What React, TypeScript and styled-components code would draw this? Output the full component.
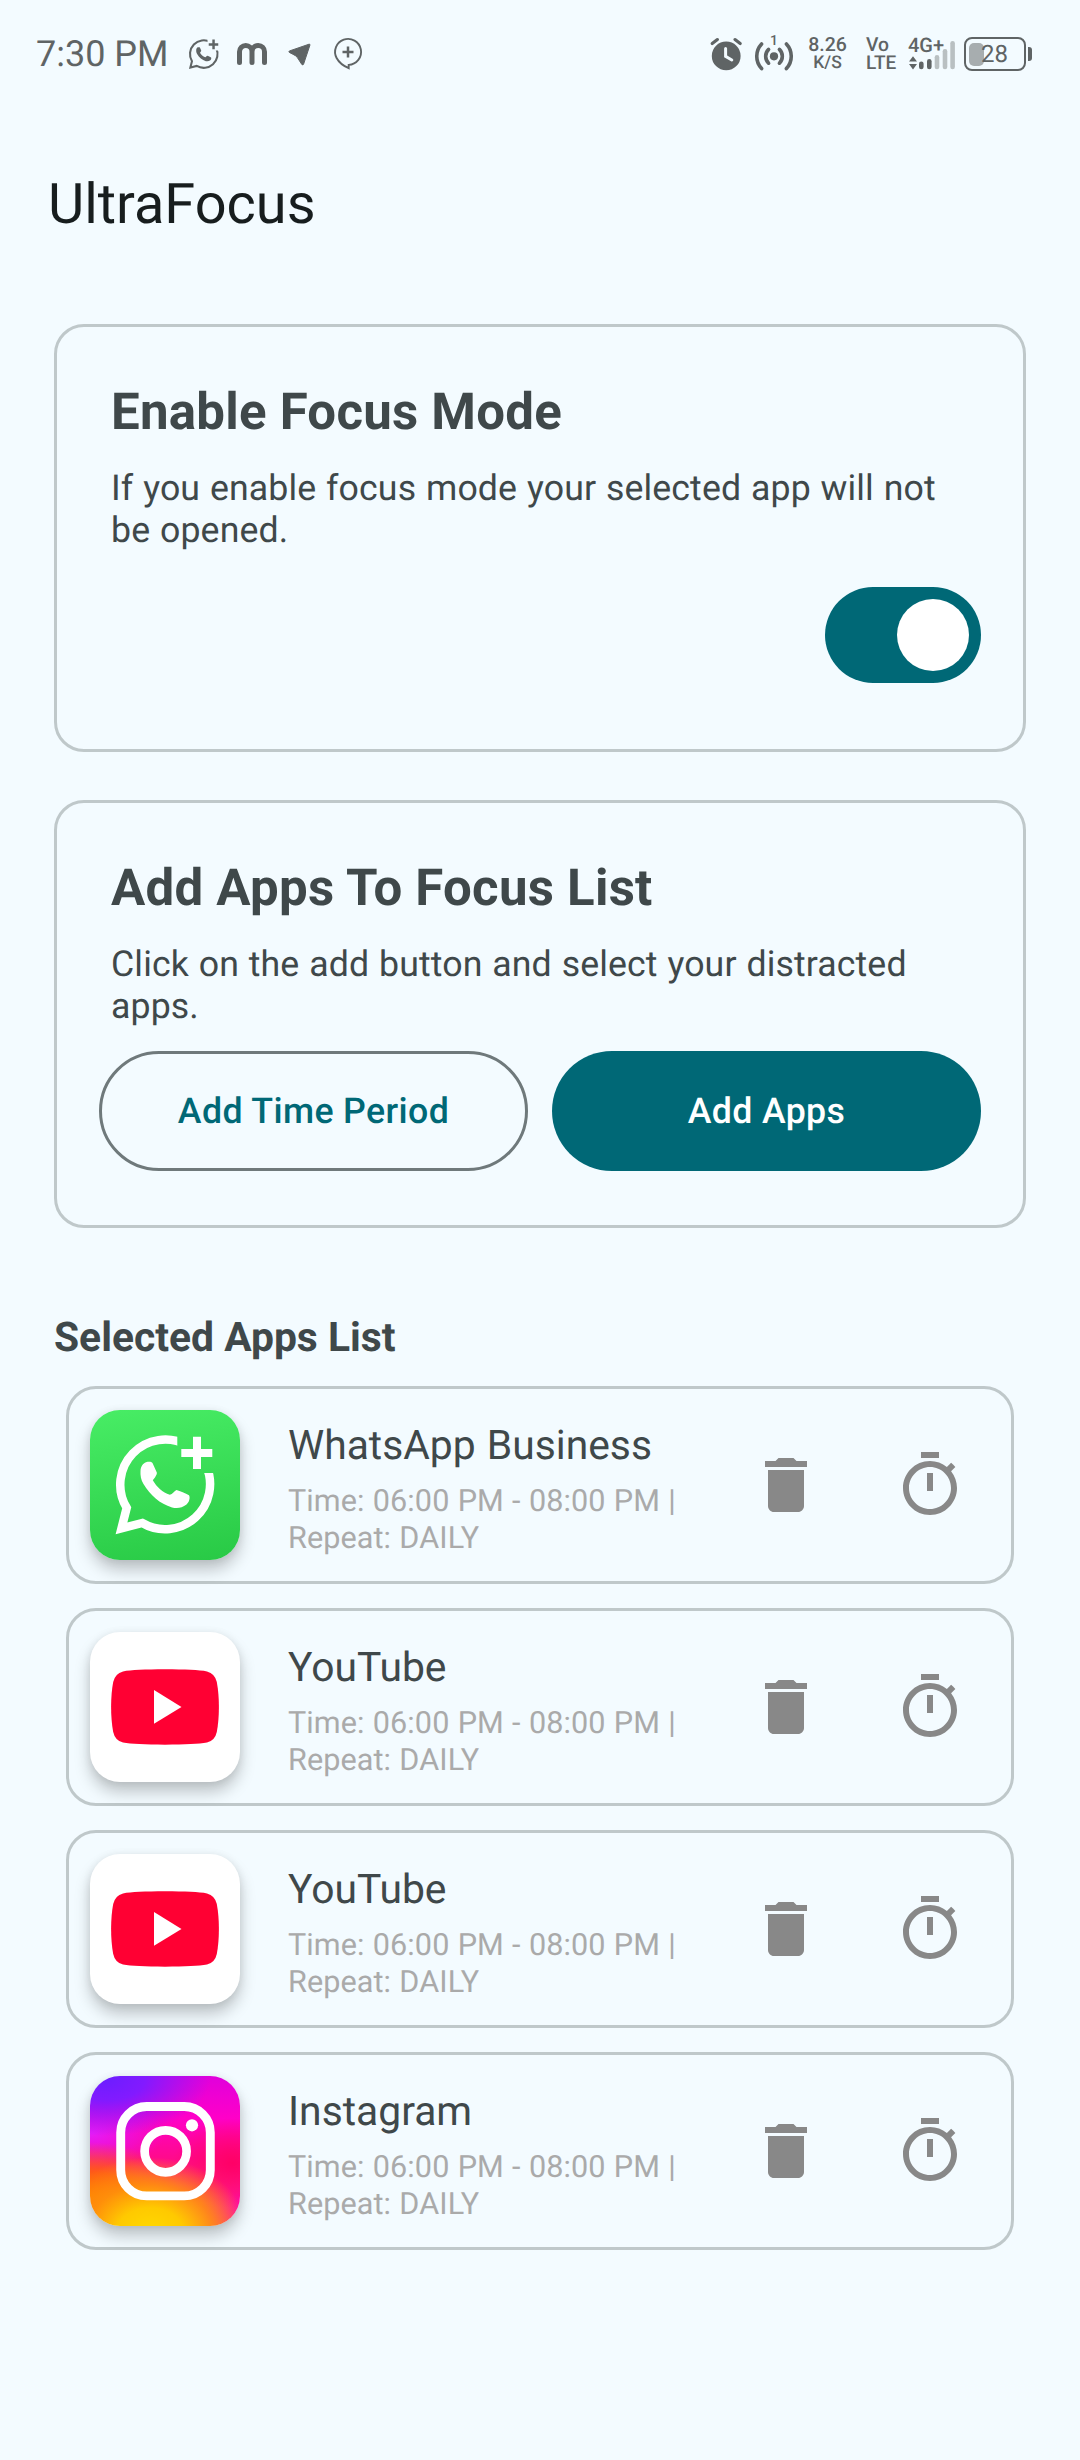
import React, { useState } from 'react';
import styled, { createGlobalStyle } from 'styled-components';

const color = {
  background: '#f3fbff',
  primary: '#006876',
  onSurface: '#171d1e',
  onSurfaceVariant: '#3f484a',
  outline: '#6f797b',
  outlineVariant: '#bfc8ca',
  muted: '#aaaaaa',
  icon: '#888888',
  status: '#5f6465',
};

const GlobalStyle = createGlobalStyle`
  *, *::before, *::after { box-sizing: border-box; }
  body {
    margin: 0;
    background: ${color.background};
    font-family: Roboto, sans-serif;
    text-rendering: geometricPrecision;
  }
  h1, h2, h3, p { margin: 0; }
  button { font: inherit; text-rendering: inherit; }
`;

const Screen = styled.div`
  display: flex;
  flex-direction: column;
  width: 1080px;
  height: 2460px;
  background: ${color.background};
`;

/* ---------- Status bar ---------- */

const StatusBar = styled.header`
  display: flex;
  justify-content: space-between;
  height: 108px;
  padding: 0 48px 0 36px;
  color: ${color.status};
`;

const StatusGroup = styled.div`
  display: flex;
  align-items: center;
`;

const Clock = styled.span`
  width: 144px;
  font-size: 36px;
  line-height: 42px;
  white-space: nowrap;
`;

const StatusIcon = styled.svg`
  display: block;
  flex: none;
  width: 48px;
  height: 48px;
  overflow: visible;
`;

const StatusStack = styled.div<{ $width: number; $align: 'center' | 'flex-start'; $inset?: number }>`
  display: flex;
  flex-direction: column;
  align-items: ${(p) => p.$align};
  width: ${(p) => p.$width}px;
  padding-left: ${(p) => p.$inset ?? 0}px;
`;

const StackLine = styled.span<{ $size: number }>`
  font-size: ${(p) => p.$size}px;
  font-weight: 500;
  line-height: 18px;
  white-space: nowrap;
`;

const Signal = styled.div`
  position: relative;
  width: 57px;
  height: 48px;
`;

const NetworkLabel = styled.span`
  position: absolute;
  left: 3px;
  top: 4px;
  font-size: 20px;
  font-weight: 500;
  line-height: 23px;
`;

const Battery = styled.div`
  display: flex;
  align-items: center;
  gap: 2px;
  margin-left: 2px;
`;

const BatteryShell = styled.div`
  position: relative;
  display: flex;
  align-items: center;
  width: 62px;
  height: 34px;
  padding-left: 3px;
  border: 2.4px solid ${color.status};
  border-radius: 8px;
`;

const BatteryFill = styled.div`
  width: 15px;
  height: 23px;
  border-radius: 5px;
  background: #a7adaf;
`;

const BatteryLevel = styled.span`
  position: absolute;
  left: 15px;
  top: 1px;
  font-size: 24px;
  line-height: 28px;
`;

const BatteryTip = styled.div`
  width: 4px;
  height: 14px;
  border-radius: 0 3px 3px 0;
  background: ${color.status};
`;

/* ---------- Page ---------- */

const AppTitle = styled.h1`
  margin-top: 63px;
  padding-left: 48px;
  color: ${color.onSurface};
  font-size: 55.9px;
  font-weight: 400;
  line-height: 66px;
`;

const Panels = styled.main`
  display: flex;
  flex-direction: column;
  gap: 48px;
  padding: 87px 54px 0;
`;

const Panel = styled.section`
  height: 428px;
  padding: 56px 42px 0;
  border: 3px solid ${color.outlineVariant};
  border-radius: 30px;
`;

const PanelTitle = styled.h2`
  padding-left: 12px;
  color: ${color.onSurfaceVariant};
  font-size: 51px;
  font-weight: 700;
  line-height: 59px;
  letter-spacing: 0.24px;
`;

const PanelText = styled.p`
  margin-top: 25px;
  padding: 0 12px;
  color: ${color.onSurfaceVariant};
  font-size: 35.7px;
  line-height: 42px;
  letter-spacing: 0.11px;
  word-spacing: 0.85px;
`;

const SwitchRow = styled.div`
  display: flex;
  justify-content: flex-end;
  margin-top: 36px;
`;

const Switch = styled.button<{ $on: boolean }>`
  display: flex;
  align-items: center;
  justify-content: ${(p) => (p.$on ? 'flex-end' : 'flex-start')};
  width: 156px;
  height: 96px;
  padding: 0 12px;
  border: 0;
  border-radius: 48px;
  background: ${(p) => (p.$on ? color.primary : color.outlineVariant)};
`;

const Thumb = styled.span`
  width: 72px;
  height: 72px;
  border-radius: 50%;
  background: #ffffff;
`;

const ButtonRow = styled.div`
  display: grid;
  grid-template-columns: 1fr 1fr;
  gap: 24px;
  margin-top: 24px;
`;

const PillButton = styled.button<{ $filled?: boolean }>`
  height: 120px;
  padding: 0;
  border: ${(p) => (p.$filled ? '0' : `3px solid ${color.outline}`)};
  border-radius: 60px;
  background: ${(p) => (p.$filled ? color.primary : 'transparent')};
  color: ${(p) => (p.$filled ? '#ffffff' : color.primary)};
  font-size: 35.7px;
  font-weight: 500;
  line-height: 42px;
  letter-spacing: 0.38px;
`;

const ListSection = styled.section`
  padding: 85px 54px 0;
`;

const ListTitle = styled.h2`
  color: ${color.onSurfaceVariant};
  font-size: 40.8px;
  font-weight: 700;
  line-height: 48px;
`;

const AppList = styled.ul`
  display: flex;
  flex-direction: column;
  gap: 24px;
  margin: 25px 0 0;
  padding: 0 12px;
  list-style: none;
`;

const AppRow = styled.li`
  display: flex;
  height: 198px;
  padding: 21px 45px 0 21px;
  border: 3px solid ${color.outlineVariant};
  border-radius: 30px;
`;

const Tile = styled.div<{ $background: string }>`
  flex: none;
  width: 150px;
  height: 150px;
  overflow: hidden;
  border-radius: 30px;
  background: ${(p) => p.$background};
  box-shadow: 0 10px 16px rgba(0, 0, 0, 0.22), 0 1px 9px rgba(0, 0, 0, 0.08);

  svg { display: block; }
`;

const AppInfo = styled.div`
  width: 430px;
  margin-left: 48px;
  padding-top: 11px;
`;

const AppName = styled.h3`
  color: ${color.onSurfaceVariant};
  font-size: 40.8px;
  font-weight: 400;
  line-height: 48px;
  word-spacing: 1px;
`;

const Schedule = styled.p`
  margin-top: 14px;
  color: ${color.muted};
  font-size: 30.6px;
  line-height: 37px;
  letter-spacing: 0.08px;
  word-spacing: 0.6px;
`;

const RowActions = styled.div`
  display: flex;
  gap: 72px;
  height: 72px;
  margin: 39px 0 0 auto;
`;

const IconButton = styled.button`
  width: 72px;
  height: 72px;
  padding: 0;
  border: 0;
  background: none;
  color: ${color.icon};

  svg { display: block; width: 72px; height: 72px; }
`;

/* ---------- Icons ---------- */

const HANDSET =
  'M50.5 61C50.8 56 53 53.5 56 52.2C58.5 51.6 61.5 51.5 62.5 53L66.8 62.5C67.3 64.5 65 67.5 62.8 70.3C67 77.5 72.5 82.2 79.8 84.8C82.5 84.2 84.5 81 86.5 80C90 81 95.5 83.3 99 85.3C100.5 88 99 92.5 96.5 94.5C92 98 87 98.8 82 97.4C70 94 60 85 53.5 74C51 70 50.2 65.5 50.5 61Z';

function ChatPlus({ id, stroke, fill }: { id: string; stroke: number; fill: string }) {
  return (
    <>
      <clipPath id={id}>
        <path d="M0 0H87.3V63H150V150H0Z" />
      </clipPath>
      <path
        clipPath={`url(#${id})`}
        d="M97 35.2A45 45 0 0 0 36.7 97.8L31.5 118.3L52.3 113A45 45 0 0 0 116 55.5"
        fill="none"
        stroke={fill}
        strokeWidth={stroke}
      />
      <path d={HANDSET} fill={fill} />
      <path d="M103 26.7h8V39h11.3v8H111v12h-8V47H91.3v-8H103Z" fill={fill} />
    </>
  );
}

const WhatsAppLogo = () => (
  <svg width="150" height="150" viewBox="0 0 150 150">
    <ChatPlus id="tile-cut" stroke={8.5} fill="#fff" />
  </svg>
);

const YouTubeLogo = () => (
  <svg width="150" height="150" viewBox="0 0 150 150">
    <path
      fill="#ff0033"
      d="M75 37.3C95 37.3 109 38 117 39.4Q125 41.5 126.8 50C129.6 65 129.6 85 126.8 100Q125 108.5 117 110.6C109 112 95 112.7 75 112.7S41 112 33 110.6Q25 108.5 23.2 100C20.4 85 20.4 65 23.2 50Q25 41.5 33 39.4C41 38 55 37.3 75 37.3Z"
    />
    <path fill="#fff" d="M64 58L91.5 75L64 91.7Z" />
  </svg>
);

const InstagramLogo = () => (
  <svg width="150" height="150" viewBox="0 0 150 150" fill="none" stroke="#fff">
    <rect x="30.7" y="30.5" width="89.6" height="89.4" rx="26" strokeWidth="8.9" />
    <circle cx="75.6" cy="75.3" r="21" strokeWidth="8.7" />
    <circle cx="102" cy="49.3" r="6.1" fill="#fff" stroke="none" />
  </svg>
);

const TrashIcon = () => (
  <svg viewBox="0 0 24 24" fill="currentColor">
    <path d="M6 19c0 1.1.9 2 2 2h8c1.1 0 2-.9 2-2V7H6v12zM19 4h-3.5l-1-1h-5l-1 1H5v2h14V4z" />
  </svg>
);

const TimerIcon = () => (
  <svg viewBox="0 0 24 24" fill="currentColor">
    <path d="M15 1H9v2h6V1zm-4 13h2V8h-2v6zm8.03-6.61l1.42-1.42c-.43-.51-.9-.99-1.41-1.41l-1.42 1.42C16.07 4.74 14.12 4 12 4c-4.97 0-9 4.03-9 9s4.02 9 9 9 9-4.03 9-9c0-2.12-.74-4.07-1.97-5.61zM12 20c-3.87 0-7-3.13-7-7s3.13-7 7-7 7 3.13 7 7-3.13 7-7 7z" />
  </svg>
);

function NotificationIcons() {
  return (
    <>
      <StatusIcon viewBox="0 0 48 48">
        <g transform="translate(0.7 1.25) scale(0.307)">
          <ChatPlus id="status-cut" stroke={6.8} fill={color.status} />
        </g>
      </StatusIcon>
      <StatusIcon viewBox="0 0 48 48" fill="none" stroke="currentColor" strokeWidth="5" strokeLinecap="round">
        <path d="M11.5 32.5V21.7a6.25 6.25 0 0 1 12.5 0V32.5M24 21.7a6.25 6.25 0 0 1 12.5 0V32.5" />
      </StatusIcon>
      <StatusIcon viewBox="0 0 48 48" fill="currentColor" stroke="currentColor" strokeLinejoin="round">
        <path d="M13.3 21L33 14.2q1.3-.3 .9 1L27.6 34.1q-.8 1.6-1.8.3L21.4 27.6Q19.8 25.5 17 24.3L13.3 22.4Q12.6 21.6 13.3 21Z" />
      </StatusIcon>
      <StatusIcon viewBox="0 0 48 48" fill="none" stroke="currentColor" strokeWidth="1.9">
        <path d="M24.7 34.9A13 13 0 1 0 12.6 28Q16 34.4 24.7 38.2Z" />
        <path d="M24 16.5v11M18.5 22h11" strokeWidth="2.5" />
      </StatusIcon>
    </>
  );
}

function SystemIcons() {
  return (
    <>
      <StatusIcon viewBox="0 0 48 48" fill="none" stroke="currentColor" strokeWidth="3.2" strokeLinecap="round">
        <circle cx="24.2" cy="25.9" r="14.4" fill="currentColor" stroke="none" />
        <path d="M10.2 13.6L15.4 9.6M33 9.6L38.2 13.6" />
        <path d="M23.6 18.6V26.4L29.8 30" stroke={color.background} strokeWidth="3" />
      </StatusIcon>
      <StatusIcon viewBox="0 0 48 48" fill="none" stroke="currentColor" strokeWidth="3.6" strokeLinecap="round">
        <circle cx="24" cy="26.3" r="4.1" fill="currentColor" stroke="none" />
        <path d="M18.6 19.4A9.6 9.6 0 0 0 18.6 33.2M29.4 19.4A9.6 9.6 0 0 1 29.4 33.2" />
        <path d="M11.6 14A18 18 0 0 0 11.6 38.6M36.4 14A18 18 0 0 1 36.4 38.6" />
        <text x="24" y="15" textAnchor="middle" fontSize="14" fontWeight="500" fill="currentColor" stroke="none">
          1
        </text>
      </StatusIcon>
    </>
  );
}

const BARS = [
  { x: 14, top: 31.5, active: true },
  { x: 22, top: 29, active: true },
  { x: 29.7, top: 25, active: false },
  { x: 37.7, top: 19, active: false },
  { x: 45.3, top: 11, active: false },
];

const SignalStrength = () => (
  <Signal>
    <svg width="56" height="48" viewBox="0 0 56 48">
      {BARS.map((bar) => (
        <rect
          key={bar.x}
          x={bar.x}
          y={bar.top}
          width="4.6"
          height={39.3 - bar.top}
          rx="2.3"
          fill={bar.active ? color.status : '#b9c0c2'}
        />
      ))}
      <path d="M8 26.2L12 31.6H4ZM8 39.4L4 34H12Z" fill={color.status} />
    </svg>
    <NetworkLabel>4G+</NetworkLabel>
  </Signal>
);

/* ---------- Data ---------- */

type Brand = 'whatsapp' | 'youtube' | 'instagram';

const BRANDS: Record<Brand, { background: string; Logo: () => React.JSX.Element }> = {
  whatsapp: { background: 'linear-gradient(170deg, #48ed65, #28c945)', Logo: WhatsAppLogo },
  youtube: { background: '#ffffff', Logo: YouTubeLogo },
  instagram: {
    background: `
      radial-gradient(ellipse 70% 38% at 10% 2%, #6c1eff 0%, #821aff 38%, rgba(190, 10, 250, 0) 100%),
      radial-gradient(ellipse 66% 52% at 40% 106%, #ffdc00 0%, #ffc900 35%, rgba(255, 150, 10, 0.8) 65%, rgba(255, 110, 30, 0) 100%),
      radial-gradient(ellipse 60% 36% at 0% 80%, #ff7a00 0%, rgba(255, 105, 0, 0.8) 45%, rgba(255, 80, 40, 0) 100%),
      radial-gradient(ellipse 50% 24% at 0% 38%, #e51cf8 0%, rgba(230, 20, 240, 0.6) 50%, rgba(235, 10, 220, 0) 100%),
      radial-gradient(ellipse 40% 30% at 95% 58%, #ff0066 0%, rgba(255, 0, 105, 0) 100%),
      radial-gradient(ellipse 30% 34% at 104% 88%, #ff00b8 0%, rgba(255, 0, 170, 0) 100%),
      linear-gradient(180deg, #e000dc 0%, #ff00c8 28%, #ff0a8c 55%, #ff3a5c 78%, #ff4a60 100%)`,
    Logo: InstagramLogo,
  },
};

const SCHEDULE = 'Time: 06:00 PM - 08:00 PM | Repeat: DAILY';

const SELECTED: { id: number; name: string; brand: Brand }[] = [
  { id: 1, name: 'WhatsApp Business', brand: 'whatsapp' },
  { id: 2, name: 'YouTube', brand: 'youtube' },
  { id: 3, name: 'YouTube', brand: 'youtube' },
  { id: 4, name: 'Instagram', brand: 'instagram' },
];

function SelectedApp({ name, brand }: { name: string; brand: Brand }) {
  const { background, Logo } = BRANDS[brand];
  return (
    <AppRow>
      <Tile $background={background}>
        <Logo />
      </Tile>
      <AppInfo>
        <AppName>{name}</AppName>
        <Schedule>{SCHEDULE}</Schedule>
      </AppInfo>
      <RowActions>
        <IconButton>
          <TrashIcon />
        </IconButton>
        <IconButton>
          <TimerIcon />
        </IconButton>
      </RowActions>
    </AppRow>
  );
}

export default function App() {
  const [focusOn, setFocusOn] = useState(true);

  return (
    <>
      <GlobalStyle />
      <Screen>
        <StatusBar>
          <StatusGroup>
            <Clock>7:30 PM</Clock>
            <NotificationIcons />
          </StatusGroup>
          <StatusGroup>
            <SystemIcons />
            <StatusStack $width={59} $align="center">
              <StackLine $size={19.5}>8.26</StackLine>
              <StackLine $size={17.5}>K/S</StackLine>
            </StatusStack>
            <StatusStack $width={48} $align="flex-start" $inset={9}>
              <StackLine $size={19.3}>Vo</StackLine>
              <StackLine $size={19}>LTE</StackLine>
            </StatusStack>
            <SignalStrength />
            <Battery>
              <BatteryShell>
                <BatteryFill />
                <BatteryLevel>28</BatteryLevel>
              </BatteryShell>
              <BatteryTip />
            </Battery>
          </StatusGroup>
        </StatusBar>

        <AppTitle>UltraFocus</AppTitle>

        <Panels>
          <Panel>
            <PanelTitle>Enable Focus Mode</PanelTitle>
            <PanelText>If you enable focus mode your selected app will not be opened.</PanelText>
            <SwitchRow>
              <Switch $on={focusOn} onClick={() => setFocusOn(!focusOn)}>
                <Thumb />
              </Switch>
            </SwitchRow>
          </Panel>
          <Panel>
            <PanelTitle>Add Apps To Focus List</PanelTitle>
            <PanelText>Click on the add button and select your distracted apps.</PanelText>
            <ButtonRow>
              <PillButton>Add Time Period</PillButton>
              <PillButton $filled>Add Apps</PillButton>
            </ButtonRow>
          </Panel>
        </Panels>

        <ListSection>
          <ListTitle>Selected Apps List</ListTitle>
          <AppList>
            {SELECTED.map((app) => (
              <SelectedApp key={app.id} name={app.name} brand={app.brand} />
            ))}
          </AppList>
        </ListSection>
      </Screen>
    </>
  );
}
